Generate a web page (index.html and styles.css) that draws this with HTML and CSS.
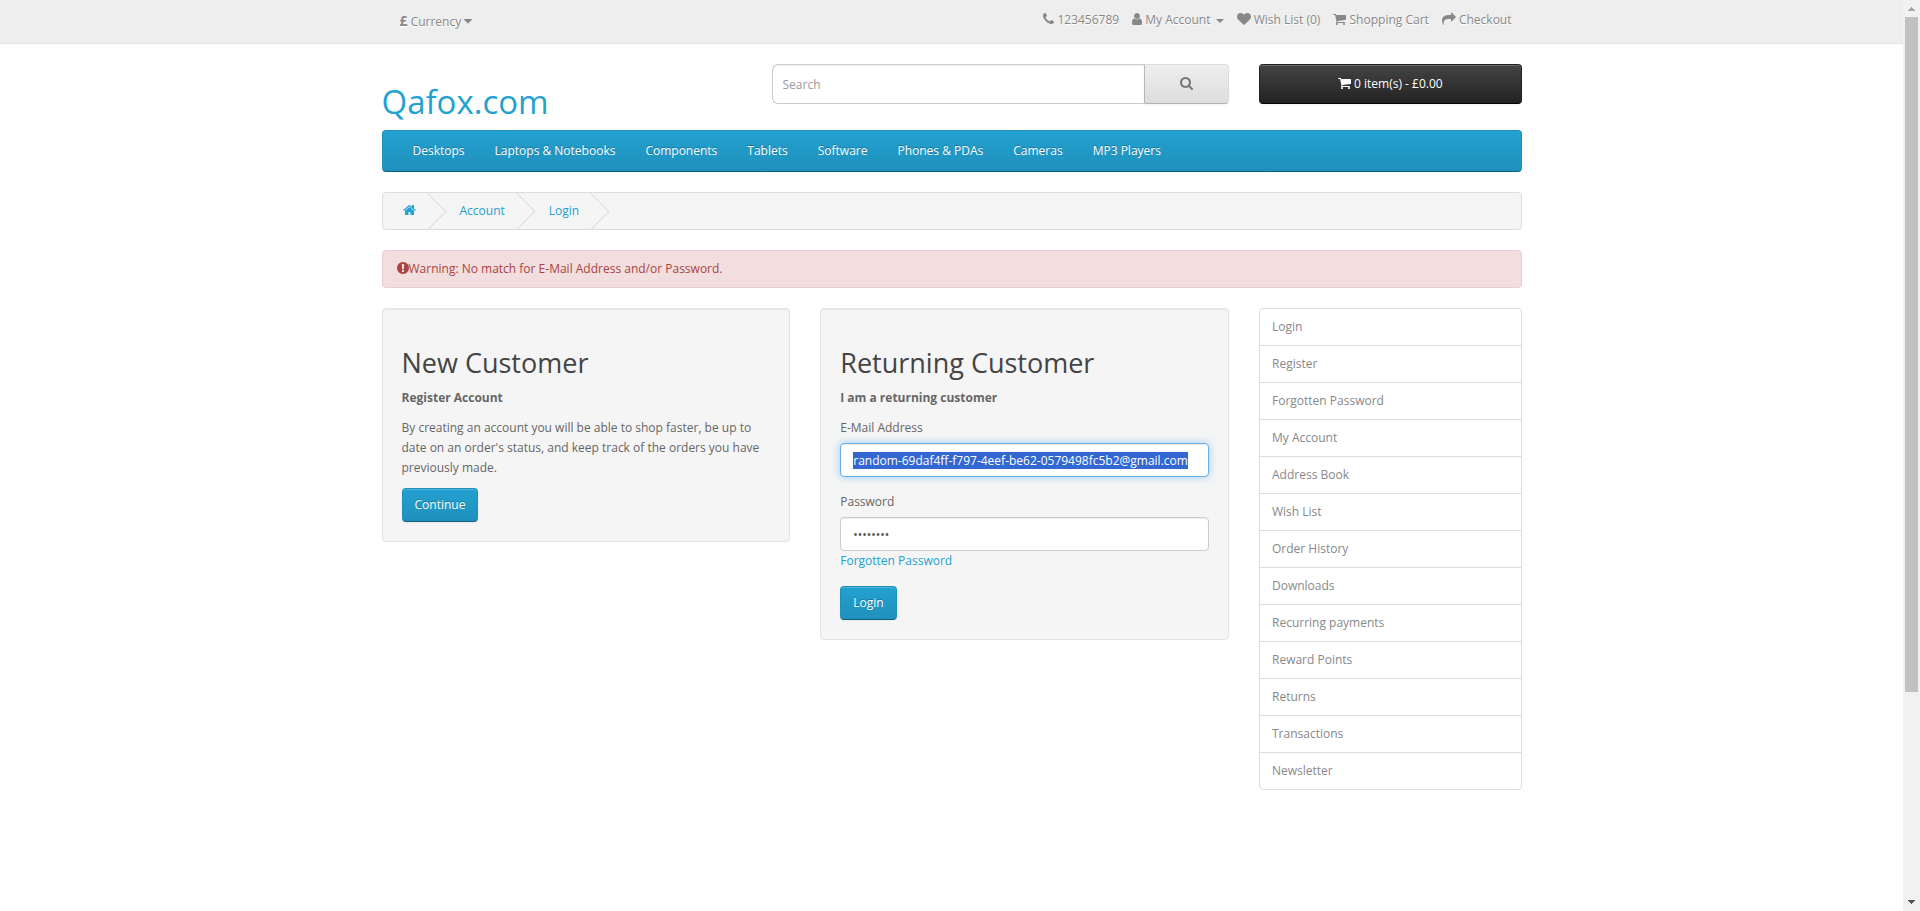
FILE: index.html
```html
<!DOCTYPE html>
<html lang="en">
<head>
<meta charset="utf-8">
<meta name="viewport" content="width=device-width, initial-scale=1">
<title>Account Login</title>
<link rel="stylesheet" href="styles.css">
</head>
<body>
<svg class="sprite" aria-hidden="true">
  <symbol id="phone" viewBox="192 0 1408 1792"><path d="M1600 1240q0 27-10 70.5t-21 68.5q-21 50-122 106-94 51-186 51-27 0-52.5-3.5t-57.5-12.5-47.5-14.5-55.5-20.5-49-18q-98-35-175-83-128-79-264.5-215.5t-215.5-264.5q-48-77-83-175-3-9-18-49t-20.5-55.5-14.5-47.5-12.5-57.5-3.5-52.5q0-92 51-186 56-101 106-122 25-11 68.5-21t70.5-10q14 0 21 3 18 6 53 76 11 19 30 54t35 63.5 31 53.5q3 4 17.5 25t21.5 35.5 7 28.5q0 20-28.5 50t-62 55-62 53-28.5 46q0 9 5 22.5t8.5 20.5 14 24 11.5 19q76 137 174 235t235 174q2 1 19 11.5t24 14 20.5 8.5 22.5 5q18 0 46-28.5t53-62 55-62 50-28.5q14 0 28.5 7t35.5 21.5 25 17.5q25 15 53.5 31t63.5 35 54 30q70 35 76 53 3 7 3 21z"/></symbol>
  <symbol id="user" viewBox="256 0 1280 1792"><path d="M1536 1399q0 109-62.5 187t-150.5 78h-854q-88 0-150.5-78t-62.5-187q0-85 8.5-160.5t31.5-152 58.5-131 94-89 134.5-34.5q131 128 313 128t313-128q76 0 134.5 34.5t94 89 58.5 131 31.5 152 8.5 160.5zm-256-887q0 159-112.5 271.5t-271.5 112.5-271.5-112.5-112.5-271.5 112.5-271.5 271.5-112.5 271.5 112.5 112.5 271.5z"/></symbol>
  <symbol id="heart" viewBox="0 0 1792 1792"><path d="M896 1664q-26 0-44-18l-624-602q-10-8-27.5-26t-55.5-65.5-68-97.5-53.5-121-23.5-138q0-220 127-344t351-124q62 0 126.5 21.5t120 58 95.5 68.5 76 68q36-36 76-68t95.5-68.5 120-58 126.5-21.5q224 0 351 124t127 344q0 221-229 450l-623 600q-18 18-44 18z"/></symbol>
  <symbol id="cart" viewBox="64 0 1664 1792"><path d="M704 1536q0 52-38 90t-90 38-90-38-38-90 38-90 90-38 90 38 38 90zm896 0q0 52-38 90t-90 38-90-38-38-90 38-90 90-38 90 38 38 90zm128-1088v512q0 24-16.5 42.5t-40.5 21.5l-1044 122q13 60 13 70 0 16-24 64h920q26 0 45 19t19 45-19 45-45 19h-1024q-26 0-45-19t-19-45q0-11 8-31.5t16-36 21.5-40 15.5-29.5l-177-823h-204q-26 0-45-19t-19-45 19-45 45-19h256q16 0 28.5 6.5t19.5 15.5 13 24.5 8 26 5.5 29.5 4.5 26h1201q26 0 45 19t19 45z"/></symbol>
  <symbol id="share" viewBox="0 0 1792 1792"><path d="M1792 640q0 26-19 45l-512 512q-19 19-45 19t-45-19-19-45v-256h-224q-98 0-175.5 6t-154 21.5-133 42.5-105.5 69.5-80 101-48.5 138.5-17.5 181q0 55 5 123 0 6 2.5 23.5t2.5 26.5q0 15-8.5 25t-23.5 10q-16 0-28-17-7-9-13-22t-13.5-30-10.5-24q-127-285-127-451 0-199 53-333 162-403 875-403h224v-256q0-26 19-45t45-19 45 19l512 512q19 19 19 45z"/></symbol>
  <symbol id="home" viewBox="64 0 1664 1792"><path d="M1472 992v480q0 26-19 45t-45 19h-384v-384h-256v384h-384q-26 0-45-19t-19-45v-480q0-1 .5-3t.5-3l575-474 575 474q1 2 1 6zm223-69l-62 74q-8 9-21 11h-3q-13 0-21-7l-692-577-692 577q-12 8-24 7-13-2-21-11l-62-74q-8-10-7-23.5t11-21.5l719-599q32-26 76-26t76 26l244 204v-195q0-14 9-23t23-9h192q14 0 23 9t9 23v408l219 182q10 8 11 21.5t-7 23.5z"/></symbol>
  <symbol id="alert" viewBox="128 0 1536 1792"><path d="M896 128q209 0 385.5 103t279.5 279.5 103 385.5-103 385.5-279.5 279.5-385.5 103-385.5-103-279.5-279.5-103-385.5 103-385.5 279.5-279.5 385.5-103zm128 1247v-190q0-14-9-23.5t-22-9.5h-192q-13 0-23 10t-10 23v190q0 13 10 23t23 10h192q13 0 22-9.5t9-23.5zm-2-344l18-621q0-12-10-18-10-8-24-8h-220q-14 0-24 8-10 6-10 18l17 621q0 10 10 17.5t24 7.5h185q14 0 23.5-7.5t10.5-17.5z"/></symbol>
  <symbol id="search" viewBox="64 0 1664 1792"><path d="M1216 832q0-185-131.5-316.5t-316.5-131.5-316.5 131.5-131.5 316.5 131.5 316.5 316.5 131.5 316.5-131.5 131.5-316.5zm512 832q0 52-38 90t-90 38q-54 0-90-38l-343-342q-179 124-399 124-143 0-273.5-55.5t-225-150-150-225-55.5-273.5 55.5-273.5 150-225 225-150 273.5-55.5 273.5 55.5 225 150 150 225 55.5 273.5q0 220-124 399l343 343q37 37 37 90z"/></symbol>
  <symbol id="caret" viewBox="384 0 1024 1792"><path d="M1408 704q0 26-19 45l-448 448q-19 19-45 19t-45-19l-448-448q-19-19-19-45t19-45 45-19h896q26 0 45 19t19 45z"/></symbol>
</svg>

<div class="page">
  <nav class="top" aria-label="Account tools">
    <div class="container top-row">
      <button class="currency" type="button"><strong>£</strong> Currency <svg class="icon w8"><use href="#caret"/></svg></button>
      <ul class="top-links">
        <li><a href="#contact"><svg class="icon w11"><use href="#phone"/></svg></a> 123456789</li>
        <li><a href="#account"><svg class="icon w10"><use href="#user"/></svg> My Account <span class="caret"></span></a></li>
        <li><a href="#wishlist"><svg class="icon w14"><use href="#heart"/></svg> Wish List (0)</a></li>
        <li><a href="#cart-page"><svg class="icon w13"><use href="#cart"/></svg> Shopping Cart</a></li>
        <li><a href="#checkout"><svg class="icon w14"><use href="#share"/></svg> Checkout</a></li>
      </ul>
    </div>
  </nav>

  <header class="header grid">
    <div class="cell"><h1 class="logo"><a href="#home-page">Qafox.com</a></h1></div>
    <div class="cell">
      <form class="search">
        <input class="search-input" type="text" placeholder="Search" aria-label="Search">
        <button class="search-btn" type="button" aria-label="Search"><svg class="icon w13"><use href="#search"/></svg></button>
      </form>
    </div>
    <div class="cell"><button class="cart-btn" type="button"><svg class="icon w13"><use href="#cart"/></svg> 0 item(s) - £0.00</button></div>
  </header>

  <div class="container">
    <nav class="menu" aria-label="Categories">
      <a href="#desktops">Desktops</a>
      <a href="#laptops">Laptops &amp; Notebooks</a>
      <a href="#components">Components</a>
      <a href="#tablets">Tablets</a>
      <a href="#software">Software</a>
      <a href="#phones">Phones &amp; PDAs</a>
      <a href="#cameras">Cameras</a>
      <a href="#mp3">MP3 Players</a>
    </nav>
    <ul class="breadcrumb">
      <li><a href="#home-page" aria-label="Home"><svg class="icon w13"><use href="#home"/></svg></a></li>
      <li><a href="#account">Account</a></li>
      <li><a href="#login">Login</a></li>
    </ul>
    <div class="alert" role="alert"><svg class="icon w12"><use href="#alert"/></svg>Warning: No match for E-Mail Address and/or Password.</div>
  </div>

  <main class="content grid">
    <div class="forms">
      <div class="cell">
        <section class="well">
          <h2>New Customer</h2>
          <p><strong>Register Account</strong></p>
          <p>By creating an account you will be able to shop faster, be up to date on an order's status, and keep track of the orders you have previously made.</p>
          <a class="btn" href="#register">Continue</a>
        </section>
      </div>
      <div class="cell">
        <section class="well">
          <h2>Returning Customer</h2>
          <p><strong>I am a returning customer</strong></p>
          <form>
            <div class="field">
              <label for="email">E-Mail Address</label>
              <input class="control" id="email" type="text" value="random-69daf4ff-f797-4eef-be62-0579498fc5b2@gmail.com" spellcheck="false">
            </div>
            <div class="field">
              <label for="password">Password</label>
              <input class="control" id="password" type="password" value="12345678">
              <a class="forgot" href="#forgotten">Forgotten Password</a>
            </div>
            <button class="btn" type="button">Login</button>
          </form>
        </section>
      </div>
    </div>
    <aside class="cell">
      <nav class="list" aria-label="Account">
        <a href="#login">Login</a>
        <a href="#register">Register</a>
        <a href="#forgotten">Forgotten Password</a>
        <a href="#account">My Account</a>
        <a href="#address">Address Book</a>
        <a href="#wishlist">Wish List</a>
        <a href="#orders">Order History</a>
        <a href="#downloads">Downloads</a>
        <a href="#recurring">Recurring payments</a>
        <a href="#rewards">Reward Points</a>
        <a href="#returns">Returns</a>
        <a href="#transactions">Transactions</a>
        <a href="#newsletter">Newsletter</a>
      </nav>
    </aside>
  </main>
</div>

<div class="scrollbar" aria-hidden="true">
  <svg class="arrow up" viewBox="0 0 17 17" shape-rendering="crispEdges"><path d="M8 7h1v1h1v1h1v1h1v1H5v-1h1V9h1V8h1z"/></svg>
  <div class="thumb"></div>
  <div class="track"></div>
  <svg class="arrow down" viewBox="0 0 17 17" shape-rendering="crispEdges"><path d="M5 6h7v1h-1v1h-1v1H9v1H8V9H7V8H6V7H5z"/></svg>
</div>
<script src="script.js"></script>
</body>
</html>
```
FILE: styles.css
```css
* { box-sizing: border-box; }

body {
  display: flex;
  margin: 0;
  background: #fff;
  color: #666;
  font: 400 12px/20px "Open Sans", "Noto Sans", sans-serif;
}

a { color: #23a1d1; text-decoration: none; }
ul { margin: 0; padding: 0; list-style: none; }
p { margin: 0 0 10px; }
button, input { font: inherit; }

.sprite { position: absolute; width: 0; height: 0; }
.icon { height: 14px; fill: currentColor; vertical-align: -2px; }
.w8 { width: 8px; }
.w10 { width: 10px; }
.w11 { width: 11px; }
.w12 { width: 12px; }
.w13 { width: 13px; }
.w14 { width: 14px; }

.page { flex: 1; min-width: 0; min-height: 100vh; }
.container { max-width: 1170px; margin: 0 auto; padding: 0 15px; }
.grid { display: grid; max-width: 1170px; margin: 0 auto; }
.cell { min-width: 0; padding: 0 15px; }

/* Top bar */
.top {
  margin-bottom: 20px;
  border-bottom: 1px solid #e2e2e2;
  background: #eee;
}
.top-row { display: flex; justify-content: space-between; align-items: flex-start; }
.currency {
  padding: 11px 18px;
  border: 0;
  background: none;
  color: #888;
  text-shadow: 0 1px #fff;
}
.currency strong { font-size: 14px; }
.top-links { display: flex; gap: 13px; padding: 10px 10px 0 0; color: #888; text-shadow: 0 1px #fff; white-space: nowrap; }
.top-links a { color: #888; }
.caret {
  display: inline-block;
  margin-left: 2px;
  border: 4px solid transparent;
  border-top-color: currentColor;
  border-bottom: 0;
  vertical-align: middle;
}

/* Header */
.header { grid-template-columns: 4fr 5fr 3fr; }
.logo { margin: 20px 0 10px; font-size: 33px; font-weight: 400; line-height: 36px; }
.search { display: flex; }
.search-input {
  flex: 1;
  min-width: 0;
  height: 40px;
  padding: 0 10px;
  border: 1px solid #ccc;
  border-right: 0;
  border-radius: 6px 0 0 6px;
  box-shadow: inset 0 1px 1px rgba(0, 0, 0, .075);
  color: #555;
}
.search-input::placeholder { color: #999; opacity: 1; }
.search-btn {
  height: 40px;
  padding: 0 35px;
  border: 1px solid;
  border-color: #ddd #ddd #b3b3b3 #b7b7b7;
  border-radius: 0 4px 4px 0;
  background: linear-gradient(#eee, #ddd);
  color: #777;
  box-shadow: inset 0 1px 0 rgba(255, 255, 255, .2), 0 1px 2px rgba(0, 0, 0, .05);
}
.cart-btn {
  width: 100%;
  height: 40px;
  border: 1px solid #222;
  border-bottom-color: #040404;
  border-radius: 4px;
  background: linear-gradient(#444, #222);
  box-shadow: inset 0 1px 0 rgba(255, 255, 255, .2), 0 1px 2px rgba(0, 0, 0, .05);
  color: #fff;
}

.menu {
  display: flex;
  margin-bottom: 20px;
  padding: 0 15px;
  border: 1px solid #1f90bb;
  border-bottom-color: #145e7a;
  border-radius: 4px;
  background: linear-gradient(#23a1d1, #1f90bb);
}
.menu a { padding: 10px 15px; color: #fff; text-shadow: 0 -1px 0 rgba(0, 0, 0, .25); }

.breadcrumb {
  display: flex;
  gap: 4px;
  margin-bottom: 20px;
  border: 1px solid #ddd;
  border-radius: 4px;
  background: #f5f5f5;
  overflow: hidden;
}
.breadcrumb li { position: relative; padding: 8px 20px; }
.breadcrumb li::after {
  content: "";
  position: absolute;
  top: 5px;
  right: -5px;
  width: 26px;
  height: 26px;
  border: solid #ddd;
  border-width: 1px 1px 0 0;
  transform: rotate(45deg);
}

.alert {
  margin-bottom: 20px;
  padding: 8px 14px;
  border: 1px solid #ebccd1;
  border-radius: 4px;
  background: #f2dede;
  color: #a94442;
}

/* Content */
.content { grid-template-columns: 9fr 3fr; align-items: start; }
.forms { display: grid; grid-template-columns: 1fr 1fr; align-items: start; }
.well {
  padding: 19px;
  border: 1px solid #e3e3e3;
  border-radius: 4px;
  background: #f5f5f5;
  box-shadow: inset 0 1px 1px rgba(0, 0, 0, .05);
}
.well h2 { margin: 20px 0 10px; color: #444; font-size: 27px; font-weight: 400; line-height: 30px; }
.btn {
  display: inline-block;
  padding: 7px 12px;
  border: 1px solid #1f90bb;
  border-bottom-color: #145e7a;
  border-radius: 4px;
  background: linear-gradient(#23a1d1, #1f90bb);
  box-shadow: inset 0 1px 0 rgba(255, 255, 255, .2), 0 1px 2px rgba(0, 0, 0, .05);
  color: #fff;
  line-height: 18px;
  text-shadow: 0 -1px 0 rgba(0, 0, 0, .25);
  vertical-align: top;
}
.field { margin-bottom: 15px; }
.field label { display: block; margin-bottom: 5px; }
.control {
  display: block;
  width: 100%;
  height: 34px;
  padding: 6px 12px;
  border: 1px solid #ccc;
  border-radius: 4px;
  background: #fff;
  box-shadow: inset 0 1px 1px rgba(0, 0, 0, .075);
  color: #555;
}
.control:focus {
  border-color: #66afe9;
  outline: 0;
  box-shadow: inset 0 1px 1px rgba(0, 0, 0, .075), 0 0 8px rgba(102, 175, 233, .6);
}
.control::selection { background: #3367d1; color: #fff; }
.forgot { display: block; }

.list { border: 1px solid #ddd; border-radius: 4px; }
.list a { display: block; padding: 8px 12px; color: #888; }
.list a + a { border-top: 1px solid #ddd; }

/* Window scrollbar */
.scrollbar {
  position: sticky;
  top: 0;
  display: flex;
  flex-direction: column;
  width: 17px;
  height: 100vh;
  background: #f1f1f1;
}
.thumb { flex: 10; margin: 0 2px; background: #c1c1c1; }
.track { flex: 3; }
.arrow { width: 17px; height: 17px; }
.up { fill: #a3a3a3; }
.down { fill: #505050; }
```
FILE: script.js
```js
const email = document.getElementById("email");
email.focus();
email.select();
```
